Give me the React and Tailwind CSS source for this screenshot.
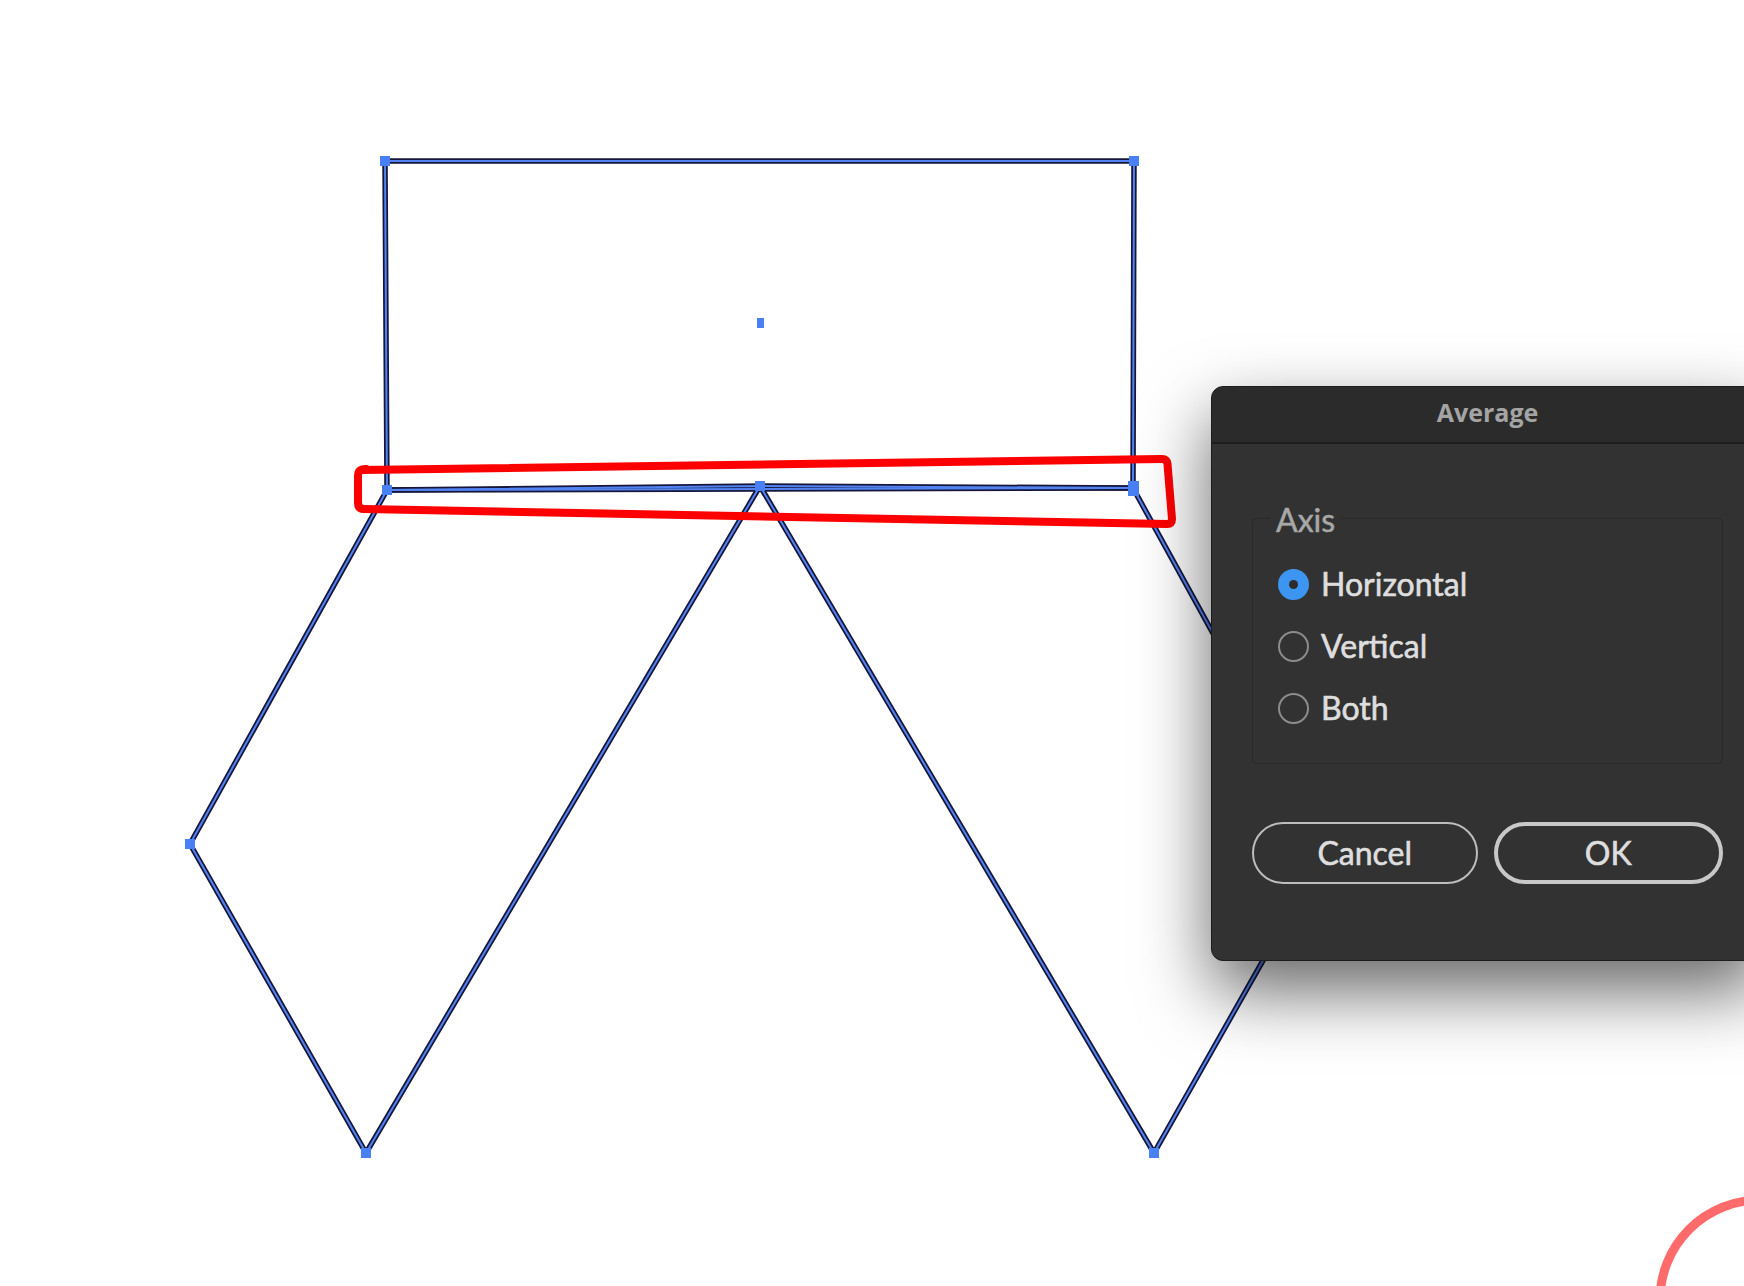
import React from 'react';

const P = {
  tl: [385, 161],
  tr: [1134, 161],
  bl: [387, 490],
  br: [1133, 488],
  mid: [760, 486],
  left: [190, 844],
  bot1: [366, 1153],
  bot2: [1154, 1153],
  right: [1329, 844],
};

const pts = (list) => list.map((k) => P[k].join(',')).join(' ');

const shapes = [
  ['tl', 'tr', 'br', 'bl'],
  ['bl', 'left', 'bot1', 'mid'],
  ['mid', 'bot2', 'right', 'br'],
];

function Artwork() {
  const anchors = ['tl', 'tr', 'bl', 'mid', 'left', 'bot1', 'bot2'];
  return (
    <svg className="absolute inset-0" width="1744" height="1286" viewBox="0 0 1744 1286">
      {shapes.map((s, i) => (
        <polygon key={`o${i}`} points={pts(s)} fill="none" stroke="#16163a" strokeWidth="5.5" strokeLinejoin="miter" />
      ))}
      {shapes.map((s, i) => (
        <polygon key={`i${i}`} points={pts(s)} fill="none" stroke="#5283f2" strokeWidth="2" strokeLinejoin="miter" />
      ))}
      {anchors.map((k) => (
        <rect key={k} x={P[k][0] - 5} y={P[k][1] - 5} width="10" height="10" fill="#4a80f5" />
      ))}
      <rect x="1128" y="481" width="11" height="15" fill="#4a80f5" />
      <rect x="757" y="318" width="7" height="10" fill="#4a80f5" />

      {/* hand drawn highlight */}
      <path
        d="M362 470 L1162 459 Q1167 459 1167.5 464 L1172 519 Q1172 524 1167 524 L364 509 Q358 509 358 503 L358 476 Q358 469 366 469"
        fill="none"
        stroke="#ff0000"
        strokeWidth="8"
        strokeLinejoin="round"
        strokeLinecap="round"
      />
      <circle cx="1760" cy="1300" r="100" fill="none" stroke="#ff6b6b" strokeWidth="9" />
    </svg>
  );
}

function Radio({ label, checked }) {
  return (
    <div className="flex h-[62px] items-center gap-[12px]">
      {checked ? (
        <span className="flex h-[31px] w-[31px] items-center justify-center rounded-full bg-[#3d95f2]">
          <span className="h-[9px] w-[9px] rounded-full bg-[#2c2c2c]" />
        </span>
      ) : (
        <span className="h-[31px] w-[31px] rounded-full border-2 border-[#8c8c8c]" />
      )}
      <span className="text-[32px] leading-[38px] text-[#dedede] [-webkit-text-stroke:0.6px_#dedede]">{label}</span>
    </div>
  );
}

function AverageDialog() {
  return (
    <div
      className="absolute left-[1211px] top-[386px] flex w-[553px] flex-col overflow-hidden rounded-[12px] border border-[#1c1c1c] bg-[#323232] shadow-[0_30px_70px_rgba(0,0,0,0.6)]"
      style={{ fontFamily: 'Lato, "Open Sans", sans-serif' }}
    >
      <div className="flex h-[57px] items-center justify-center border-b-2 border-[#1d1d1d] bg-[#2b2b2b] pb-[3px]">
        <span className="text-[25px] font-bold text-[#a4a4a4]" style={{ fontFamily: '"Open Sans", sans-serif' }}>
          Average
        </span>
      </div>
      <div className="flex flex-col px-[40px] pt-[74px] pb-[76px]">
        <div className="relative h-[246px] rounded-[5px] border border-[#292929] pl-[25px] pt-[34px]">
          <span className="absolute -top-[18px] left-[17px] bg-[#323232] px-[6px] text-[32px] leading-[38px] text-[#a8a8a8] [-webkit-text-stroke:0.5px_#a8a8a8]">
            Axis
          </span>
          <div className="flex flex-col">
            <Radio label="Horizontal" checked />
            <Radio label="Vertical" />
            <Radio label="Both" />
          </div>
        </div>
        <div className="mt-[58px] flex gap-[16px]">
          <button className="flex h-[62px] flex-1 items-center justify-center rounded-full border-2 border-[#bdbdbd] text-[32px] text-[#dedede] [-webkit-text-stroke:0.6px_#dedede]">
            Cancel
          </button>
          <button className="flex h-[62px] flex-1 items-center justify-center rounded-full border-4 border-[#c8c8c8] text-[32px] text-[#dedede] [-webkit-text-stroke:0.6px_#dedede]">
            OK
          </button>
        </div>
      </div>
    </div>
  );
}

export default function App() {
  return (
    <div className="relative h-[1286px] w-[1744px] overflow-hidden bg-white">
      <Artwork />
      <AverageDialog />
    </div>
  );
}
